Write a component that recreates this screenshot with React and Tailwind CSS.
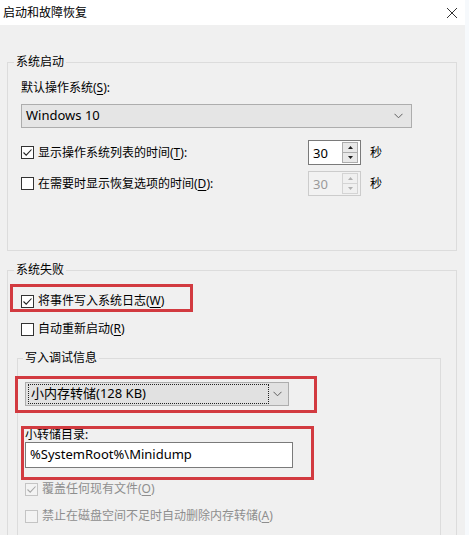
import React from 'react';

const font = "font-['Noto_Sans','Noto_Sans_CJK_SC',sans-serif]";

function Check({ checked, disabled }) {
  return (
    <span
      className={`flex h-[13px] w-[13px] shrink-0 items-center justify-center border ${
        disabled ? 'border-[#c4c4c4] bg-[#f3f3f3]' : 'border-[#333333] bg-white'
      }`}
    >
      {checked && (
        <svg width="11" height="11" viewBox="0 0 11 11" fill="none">
          <path d="M1.5 5.5 L4.2 8.2 L9.5 2.5" stroke={disabled ? '#a8a8a8' : '#222222'} strokeWidth="1.1" />
        </svg>
      )}
    </span>
  );
}

function CheckRow({ checked, disabled, children, className = '' }) {
  return (
    <div className={`flex h-[16px] items-center ${className}`}>
      <Check checked={checked} disabled={disabled} />
      <span className={`ml-[4px] whitespace-nowrap leading-[16px] ${disabled ? 'text-[#8e8e8e]' : ''}`}>{children}</span>
    </div>
  );
}

function Chevron() {
  return (
    <svg width="9" height="6" viewBox="0 0 9 6" fill="none">
      <path d="M0.5 0.8 L4.5 4.8 L8.5 0.8" stroke="#606060" strokeWidth="1" />
    </svg>
  );
}

function Spinner({ disabled }) {
  const arrow = disabled ? '#b0b0b0' : '#202020';
  return (
    <div
      className={`flex h-[25px] w-[53px] items-center border ${
        disabled ? 'border-[#cccccc] bg-[#f2f2f2] text-[#9a9a9a]' : 'border-[#7a7a7a] bg-white'
      }`}
    >
      <span className="ml-[4px] flex-1 text-[13px] leading-[16px]">30</span>
      <div className="mr-[2px] flex flex-col">
        <div className={`flex h-[11px] w-[16px] items-center justify-center border ${disabled ? 'border-[#d4d4d4] bg-[#f0f0f0]' : 'border-[#acacac] bg-[#e8e8e8]'}`}>
          <svg width="5" height="3" viewBox="0 0 5 3"><path d="M0 3 L2.5 0 L5 3 Z" fill={arrow} /></svg>
        </div>
        <div className={`-mt-[1px] flex h-[11px] w-[16px] items-center justify-center border ${disabled ? 'border-[#d4d4d4] bg-[#f0f0f0]' : 'border-[#acacac] bg-[#e8e8e8]'}`}>
          <svg width="5" height="3" viewBox="0 0 5 3"><path d="M0 0 L2.5 3 L5 0 Z" fill={arrow} /></svg>
        </div>
      </div>
    </div>
  );
}

function U({ children }) {
  return <span className="underline underline-offset-2">{children}</span>;
}

const red = 'pointer-events-none absolute border-[3px] border-[#d23a40]';

export default function App() {
  return (
    <div className={`flex h-[535px] w-[469px] overflow-hidden text-[12px] text-black ${font}`}>
      <div className="flex w-[465px] flex-col">
        <div className="flex h-[25px] shrink-0 items-center justify-between bg-white pl-[3px] pr-[7px]">
          <span className="leading-[16px]">启动和故障恢复</span>
          <svg width="12" height="12" viewBox="0 0 12 12" fill="none">
            <path d="M1 1 L11 11 M11 1 L1 11" stroke="#333333" strokeWidth="1" />
          </svg>
        </div>

        <div className="flex-1 bg-[#f0f0f0] pt-[29px]">
          <fieldset className="ml-[7px] w-[450px] border border-[#dcdcdc] pb-[54px]">
            <legend className="ml-[6px] px-[2px] leading-[16px]">系统启动</legend>
            <div className="pl-[13px]">
              <div className="mt-[10px] leading-[16px]">
                默认操作系统(<U>S</U>):
              </div>
              <div className="mt-[8px] flex h-[24px] w-[391px] items-center justify-between border border-[#adadad] bg-[#e5e5e5] pl-[4px] pr-[8px]">
                <span className="text-[13px]">Windows 10</span>
                <Chevron />
              </div>
              <div className="mt-[12px] flex h-[25px] items-center">
                <div className="w-[287px]">
                  <CheckRow checked>
                    显示操作系统列表的时间(<U>T</U>):
                  </CheckRow>
                </div>
                <Spinner />
                <span className="ml-[9px]">秒</span>
              </div>
              <div className="mt-[6px] flex h-[25px] items-center">
                <div className="w-[287px]">
                  <CheckRow>
                    在需要时显示恢复选项的时间(<U>D</U>):
                  </CheckRow>
                </div>
                <Spinner disabled />
                <span className="ml-[9px]">秒</span>
              </div>
            </div>
          </fieldset>

          <fieldset className="ml-[7px] mt-[11px] w-[450px] border border-[#dcdcdc] pb-[40px]">
            <legend className="ml-[6px] px-[2px] leading-[16px]">系统失败</legend>
            <div className="pl-[13px]">
              <div className="relative mt-[15px]">
                <CheckRow checked>
                  将事件写入系统日志(<U>W</U>)
                </CheckRow>
                <span className={`${red} left-[-11px] top-[-9px] h-[28px] w-[183px]`} />
              </div>
              <CheckRow className="mt-[12px]">
                自动重新启动(<U>R</U>)
              </CheckRow>

              <fieldset className="-ml-[4px] mt-[13px] w-[424px] border border-[#dcdcdc] pb-[30px]">
                <legend className="ml-[5px] px-[2px] leading-[16px]">写入调试信息</legend>
                <div className="pl-[7px]">
                  <div className="relative mt-[16px] w-[264px]">
                    <div className="flex h-[24px] items-center border border-[#adadad] bg-[#e1e1e1] pl-[2px] pr-[6px]">
                      <span className="flex h-[20px] w-[241px] items-center border border-dotted border-[#222222] pl-[2px] text-[13px]">
                        小内存转储(128 KB)
                      </span>
                      <span className="ml-auto flex">
                        <Chevron />
                      </span>
                    </div>
                    <span className={`${red} left-[-10px] top-[-6px] h-[37px] w-[302px]`} />
                  </div>

                  <div className="relative mt-[21px]">
                    <div className="leading-[16px]">小转储目录:</div>
                    <div className="-mt-[1px] flex h-[26px] w-[268px] items-center border border-[#7a7a7a] bg-white pl-[4px] text-[13px]">
                      %SystemRoot%\Minidump
                    </div>
                    <span className={`${red} left-[-4px] top-[-1px] h-[54px] w-[293px]`} />
                  </div>

                  <CheckRow checked disabled className="mt-[13px]">
                    覆盖任何现有文件(<U>O</U>)
                  </CheckRow>
                  <CheckRow disabled className="mt-[11px]">
                    禁止在磁盘空间不足时自动删除内存转储(<U>A</U>)
                  </CheckRow>
                </div>
              </fieldset>
            </div>
          </fieldset>
        </div>
      </div>
      <div className="w-[4px] bg-[#f6f9fc]" />
    </div>
  );
}
